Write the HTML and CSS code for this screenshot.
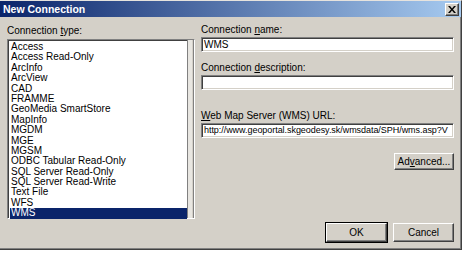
FILE: index.html
```html
<!DOCTYPE html>
<html>
<head>
<meta charset="utf-8">
<link rel="stylesheet" href="styles.css">
</head>
<body>
<div class="dialog">
  <div class="titlebar">
    <span class="title">New Connection</span>
    <span class="close"><svg width="8" height="7" viewBox="0 0 8 7"><path d="M0 0h2l2 2.5L6 0h2L5 3.5 8 7H6L4 4.5 2 7H0l3-3.5z" fill="#000"/></svg></span>
  </div>
  <div class="content">
    <div class="left">
      <div class="label">Connection <u>t</u>ype:</div>
      <div class="listwrap">
        <div class="listbox">
          <div class="item">Access</div>
          <div class="item">Access Read-Only</div>
          <div class="item">ArcInfo</div>
          <div class="item">ArcView</div>
          <div class="item">CAD</div>
          <div class="item">FRAMME</div>
          <div class="item">GeoMedia SmartStore</div>
          <div class="item">MapInfo</div>
          <div class="item">MGDM</div>
          <div class="item">MGE</div>
          <div class="item">MGSM</div>
          <div class="item">ODBC Tabular Read-Only</div>
          <div class="item">SQL Server Read-Only</div>
          <div class="item">SQL Server Read-Write</div>
          <div class="item">Text File</div>
          <div class="item">WFS</div>
          <div class="item selected">WMS</div>
        </div>
        <div class="scroll"></div>
      </div>
    </div>
    <div class="right">
      <div class="label">Connection <u>n</u>ame:</div>
      <div class="field">WMS</div>
      <div class="label gap">Connection <u>d</u>escription:</div>
      <div class="field"></div>
      <div class="label gap2"><u>W</u>eb Map Server (WMS) URL:</div>
      <div class="field url">http://www.geoportal.skgeodesy.sk/wmsdata/SPH/wms.asp?V</div>
      <div class="adv-row"><div class="btn adv">Ad<u>v</u>anced...</div></div>
      <div class="btn-row">
        <div class="btn ok">OK</div>
        <div class="btn">Cancel</div>
      </div>
    </div>
  </div>
</div>
</body>
</html>
```
FILE: styles.css
```css
* { box-sizing: border-box; }
body {
  margin: 0;
  background: #fff;
  font-family: "Liberation Sans", Arial, sans-serif;
  font-size: 10px;
  color: #000;
}
.dialog {
  width: 462px;
  height: 250px;
  background: #d4d0c8;
  border-top: 1px solid #e6e3de;
  border-right: 1px solid #404040;
  border-bottom: 1px solid #404040;
  box-shadow: inset -1px -1px 0 #808080;
  display: flex;
  flex-direction: column;
}
.titlebar {
  height: 16px;
  background: linear-gradient(to right, #0a246a, #a6caf0);
  display: flex;
  align-items: center;
  justify-content: space-between;
  padding: 0 2px 0 3px;
}
.title {
  color: #fff;
  font-weight: bold;
  font-size: 10.5px;
}
.close {
  width: 14px;
  height: 13px;
  background: #d4d0c8;
  border: 1px solid;
  border-color: #fff #404040 #404040 #fff;
  box-shadow: inset -1px -1px 0 #808080;
  display: flex;
  align-items: center;
  justify-content: center;
}
.content {
  flex: 1;
  display: flex;
  padding: 7px 7px 7px 7px;
  gap: 6px;
}
.left { flex: none; width: 188px; display: flex; flex-direction: column; }
.right { flex: 1; min-width: 0; display: flex; flex-direction: column; }
.label { line-height: 11px; height: 11px; white-space: nowrap; }
.left .label { margin-top: 1px; }
.listwrap {
  margin-top: 3px;
  height: 180px;
  display: flex;
  border: 1px solid;
  border-color: #808080 #fff #fff #808080;
  box-shadow: inset 1px 1px 0 #404040;
}
.listbox {
  flex: 1;
  background: #fff;
  padding: 1px 1px 0 1px;
  border-top: 1px solid #404040;
  border-left: 1px solid #404040;
}
.item {
  height: 10.4px;
  line-height: 10.4px;
  padding-left: 1px;
  white-space: nowrap;
}
.item.selected { background: #0a246a; color: #fff; margin-right: -1px; }
.scroll {
  width: 7px;
  background: #d4d0c8;
  border-left: 1px solid #808080;
  box-shadow: inset 4px 0 0 #e8e6e1, inset -1px 0 0 #808080;
}
.field {
  margin-top: 2px;
  height: 15px;
  background: #fff;
  border: 1px solid;
  border-color: #808080 #fff #fff #808080;
  box-shadow: inset 1px 1px 0 #404040, inset -1px -1px 0 #d4d0c8;
  line-height: 13px;
  padding-left: 2px;
  white-space: nowrap;
  overflow: hidden;
}
.field.url { font-size: 9px; letter-spacing: -0.05px; }
.gap { margin-top: 10px; }
.gap2 { margin-top: 20px; }
.adv-row { display: flex; justify-content: flex-end; margin-top: 15px; }
.btn {
  width: 61px;
  height: 19px;
  background: #d4d0c8;
  border: 1px solid;
  border-color: #fff #404040 #404040 #fff;
  box-shadow: inset -1px -1px 0 #808080;
  display: flex;
  align-items: center;
  justify-content: center;
}
.adv { height: 17px; width: 60px; }
.btn-row {
  margin-top: auto;
  display: flex;
  justify-content: flex-end;
  gap: 6px;
  margin-bottom: 0;
}
.btn.ok {
  outline: 1px solid #000;
  outline-offset: 0;
}
```
